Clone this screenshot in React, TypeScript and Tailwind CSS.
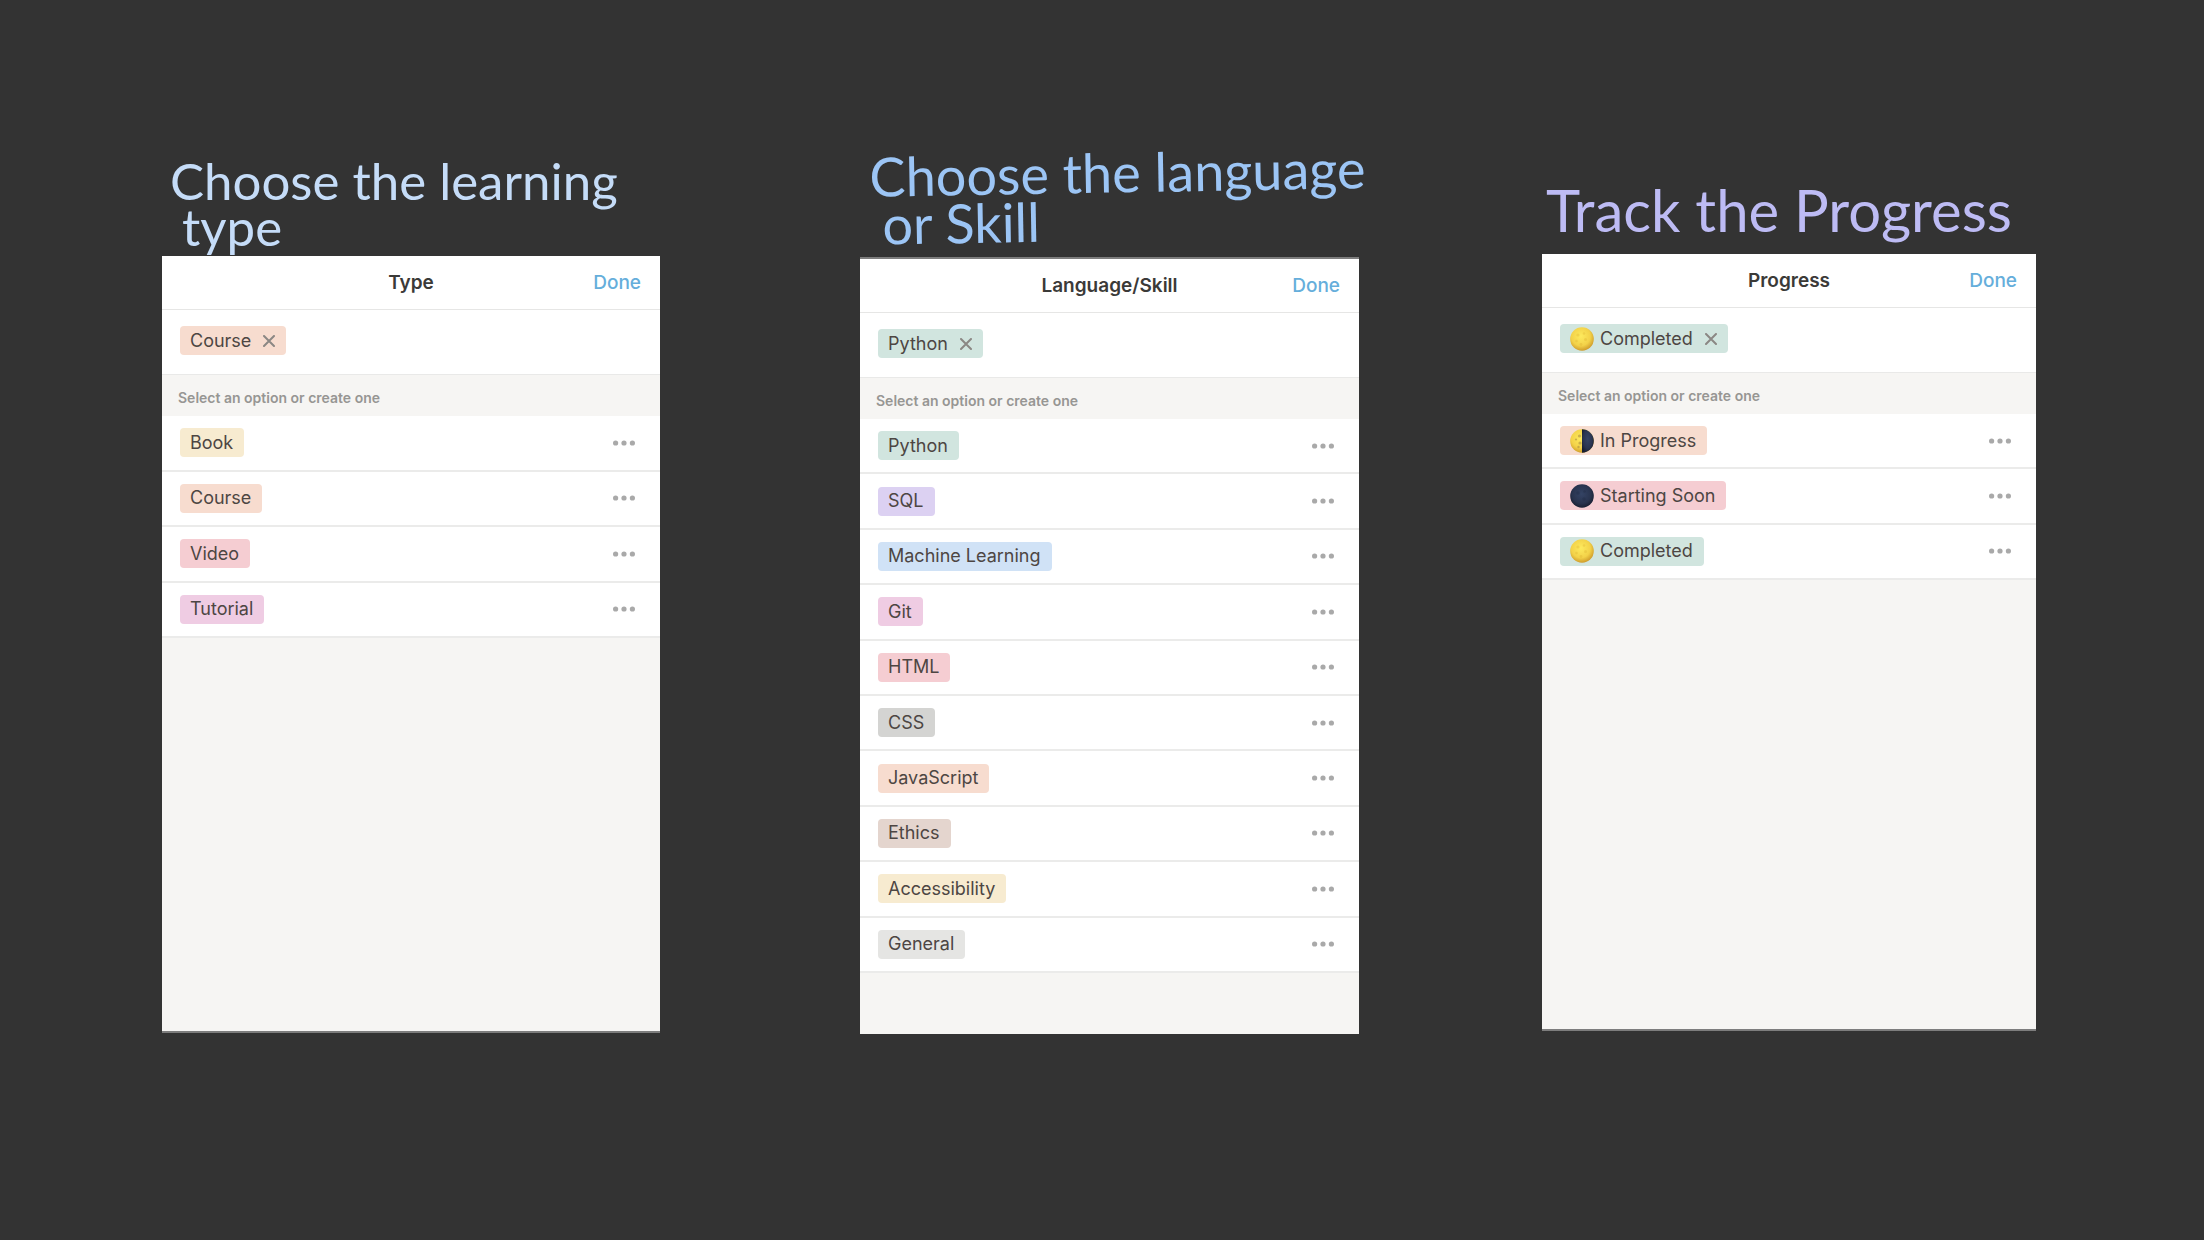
import { useId, useState } from "react";

type Phase = "full" | "half" | "new";
type Option = { name: string; color: string; moon?: Phase };

const typeOptions: Option[] = [
  { name: "Book", color: "bg-[#f7ebd0]" },
  { name: "Course", color: "bg-[#f7dccf]" },
  { name: "Video", color: "bg-[#f5cdd2]" },
  { name: "Tutorial", color: "bg-[#efcce3]" },
];

const languageOptions: Option[] = [
  { name: "Python", color: "bg-[#d1e5df]" },
  { name: "SQL", color: "bg-[#dcd1f2]" },
  { name: "Machine Learning", color: "bg-[#d0e2f6]" },
  { name: "Git", color: "bg-[#efcce3]" },
  { name: "HTML", color: "bg-[#f5cdd2]" },
  { name: "CSS", color: "bg-[#d4d4d2]" },
  { name: "JavaScript", color: "bg-[#f7dccf]" },
  { name: "Ethics", color: "bg-[#e4d5ce]" },
  { name: "Accessibility", color: "bg-[#f7ebd0]" },
  { name: "General", color: "bg-[#e5e5e3]" },
];

const progressOptions: Option[] = [
  { name: "In Progress", color: "bg-[#f7dccf]", moon: "half" },
  { name: "Starting Soon", color: "bg-[#f5cdd2]", moon: "new" },
  { name: "Completed", color: "bg-[#d1e5df]", moon: "full" },
];

function Moon({ phase }: { phase: Phase }) {
  const id = useId();
  const gold = `${id}gold`;
  const night = `${id}night`;
  return (
    <svg viewBox="0 0 24 24" className="size-6 shrink-0" aria-hidden="true">
      <defs>
        <radialGradient id={gold} cx="45%" cy="38%" r="62%">
          <stop offset="0%" stopColor="#fdea5e" />
          <stop offset="65%" stopColor="#f3d249" />
          <stop offset="100%" stopColor="#cf9c2b" />
        </radialGradient>
        <radialGradient id={night} cx="48%" cy="42%" r="60%">
          <stop offset="0%" stopColor="#344364" />
          <stop offset="65%" stopColor="#29344f" />
          <stop offset="100%" stopColor="#171e30" />
        </radialGradient>
      </defs>
      <circle cx="12" cy="12" r="11.8" fill={`url(#${phase === "new" ? night : gold})`} />
      {phase === "full" && (
        <g fill="#dcae2e" opacity="0.3">
          <circle cx="8" cy="8" r="1.6" />
          <circle cx="14" cy="6.5" r="1.2" />
          <circle cx="15.5" cy="12.5" r="1.5" />
          <circle cx="6.5" cy="14" r="1.3" />
          <circle cx="11" cy="17.5" r="1.4" />
        </g>
      )}
      {phase === "half" && (
        <g>
          <path d="M12 .2a11.8 11.8 0 0 1 0 23.6z" fill={`url(#${night})`} />
          <g fill="#a8893f" opacity="0.55">
            <circle cx="9.5" cy="7" r="1.6" />
            <circle cx="10" cy="14" r="1.6" />
            <circle cx="6" cy="10.5" r="1.1" />
            <circle cx="8.5" cy="18" r="1.2" />
          </g>
        </g>
      )}
      {phase === "new" && (
        <g fill="#1d2740" opacity="0.3">
          <circle cx="8" cy="9" r="1.8" />
          <circle cx="14.5" cy="7.5" r="1.3" />
          <circle cx="14" cy="15" r="1.7" />
        </g>
      )}
    </svg>
  );
}

function Tag({ option, onRemove }: { option: Option; onRemove?: () => void }) {
  return (
    <span
      className={`inline-flex h-[29px] items-center rounded pr-[11px] pl-[10px] text-lg leading-none text-[#4d4643] ${option.color}`}
    >
      {option.moon && (
        <span className="mr-1.5">
          <Moon phase={option.moon} />
        </span>
      )}
      {option.name}
      {onRemove && (
        <button type="button" onClick={onRemove} aria-label={`Remove ${option.name}`} className="ml-3">
          <svg viewBox="0 0 12 12" className="size-3 stroke-[#8b8784]" strokeWidth="2" strokeLinecap="round" aria-hidden="true">
            <path d="M1 1l10 10M11 1L1 11" />
          </svg>
        </button>
      )}
    </span>
  );
}

function Panel({
  title,
  options,
  initial,
  listHeight,
  edge,
}: {
  title: string;
  options: Option[];
  initial: string;
  listHeight: string;
  edge: string;
}) {
  const [selected, setSelected] = useState<string | null>(initial);
  const current = options.find((o) => o.name === selected);
  return (
    <div className={`border-[#7d7d7d] bg-[#f6f5f3] ${edge}`}>
      <div className="flex min-h-[775px] flex-col">
        <header className="grid h-[54px] grid-cols-[1fr_auto_1fr] items-center border-b border-[#e6e6e5] bg-white px-[19px] pt-px text-[19px]">
          <h2 className="col-start-2 font-semibold text-[#3b3a38]">{title}</h2>
          <button type="button" className="justify-self-end font-medium text-[#65aedb]">
            Done
          </button>
        </header>
        <div className="h-[65px] border-b border-[#e9e9e8] bg-white px-[18px] pt-4">
          {current && <Tag option={current} onRemove={() => setSelected(null)} />}
        </div>
        <p className="flex h-[41px] items-end px-4 pb-2 text-sm font-semibold text-[#979693]">
          Select an option or create one
        </p>
        <ul className={`grid auto-rows-fr bg-white ${listHeight}`}>
          {options.map((o) => (
            <li key={o.name} className="flex items-center justify-between border-b-2 border-[#ebebea] pr-[25px] pl-[18px]">
              <button type="button" className="flex" onClick={() => setSelected(o.name)}>
                <Tag option={o} />
              </button>
              <button type="button" aria-label={`Edit ${o.name}`}>
                <svg viewBox="0 0 22 6" className="h-1.5 w-[22px] fill-[#a9a9a9]" aria-hidden="true">
                  <circle cx="2.6" cy="3" r="2.6" />
                  <circle cx="11" cy="3" r="2.6" />
                  <circle cx="19.4" cy="3" r="2.6" />
                </svg>
              </button>
            </li>
          ))}
        </ul>
      </div>
    </div>
  );
}

export default function App() {
  return (
    <main className="grid min-h-screen grid-cols-[162fr_498fr_200fr_499fr_183fr_494fr_168fr] items-start bg-[#333333] font-[Inter,sans-serif]">
      <section className="col-start-2 min-w-0 pt-[158px]">
        <h1 className="h-[98px] pl-2 font-[Lato,sans-serif] text-[51px] leading-[46px] whitespace-nowrap text-[#c5dcf8]">
          Choose the learning
          <span className="block pl-3">type</span>
        </h1>
        <Panel title="Type" options={typeOptions} initial="Course" listHeight="h-[222px]" edge="border-b-2" />
      </section>
      <section className="col-start-4 min-w-0 pt-[153px]">
        <h1 className="h-[104px] origin-left -rotate-1 pl-[10px] font-[Lato,sans-serif] text-[54px] leading-[48px] whitespace-nowrap text-[#9cc5f5]">
          Choose the language
          <span className="block pl-3">or Skill</span>
        </h1>
        <Panel title="Language/Skill" options={languageOptions} initial="Python" listHeight="h-[554px]" edge="border-t-2" />
      </section>
      <section className="col-start-6 min-w-0 pt-[186px]">
        <h1 className="h-[68px] pl-1 font-[Lato,sans-serif] text-[58px] leading-[48px] whitespace-nowrap text-[#bdbbf4]">
          Track the Progress
        </h1>
        <Panel title="Progress" options={progressOptions} initial="Completed" listHeight="h-[166px]" edge="border-b-2" />
      </section>
    </main>
  );
}
